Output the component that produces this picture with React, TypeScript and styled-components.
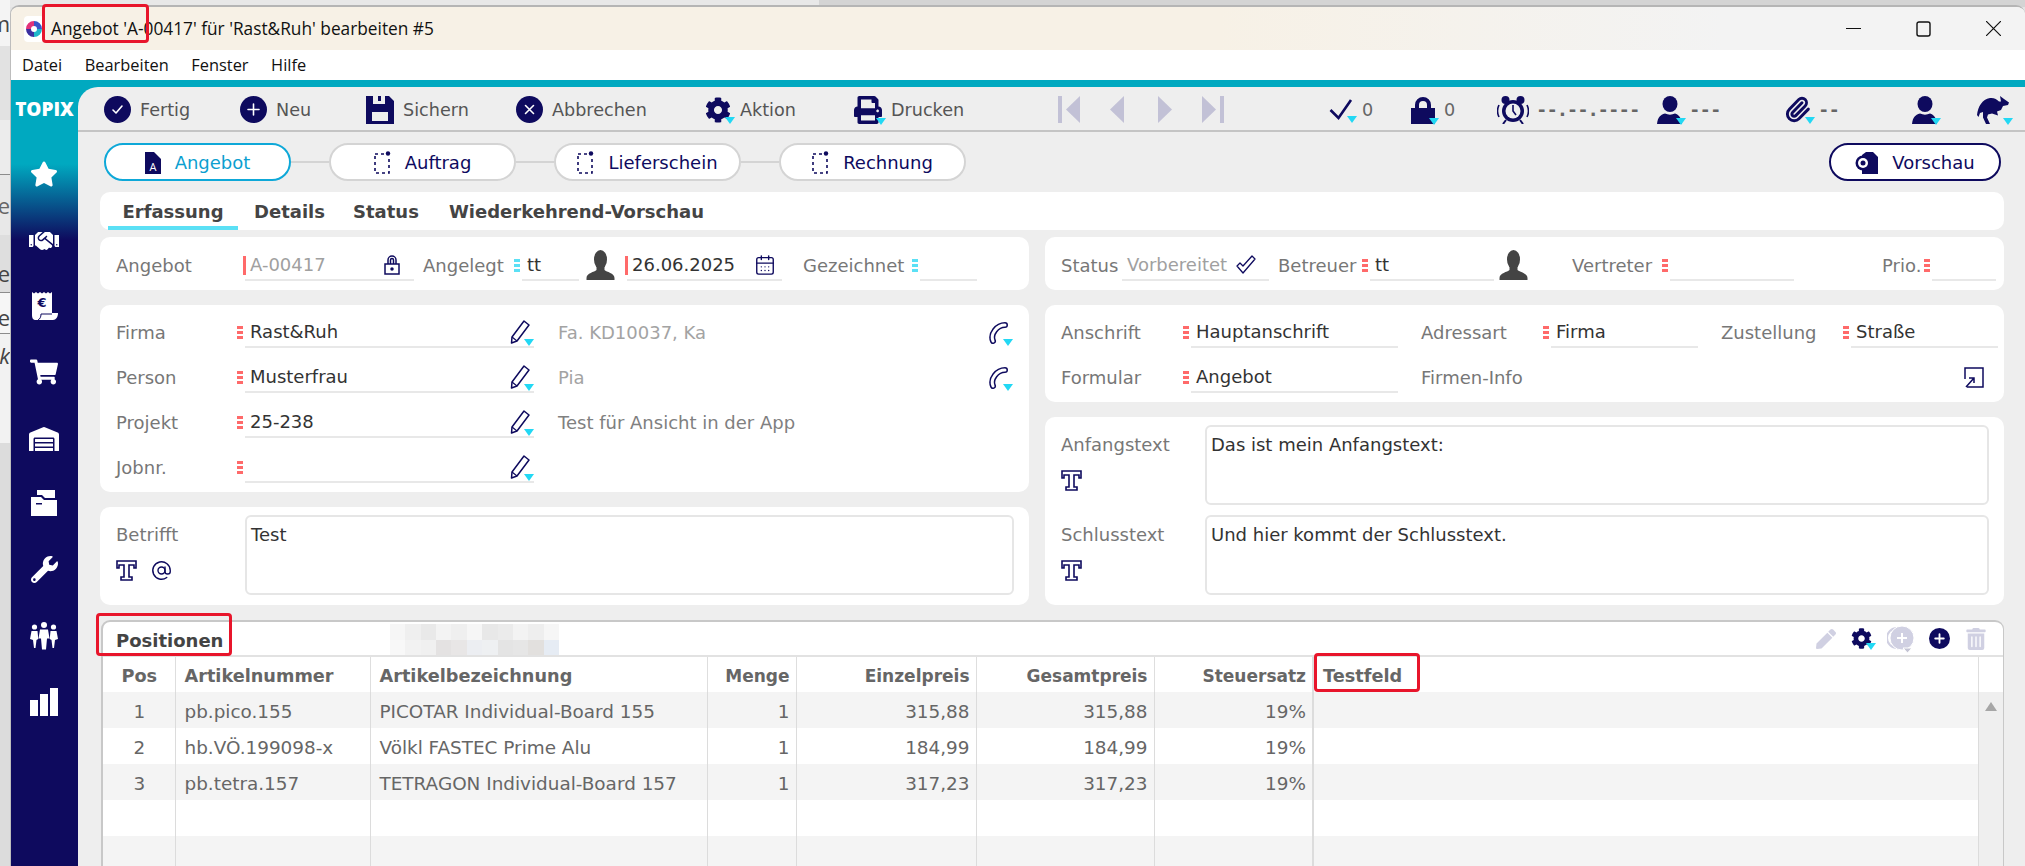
import React from 'react';
import styled, { createGlobalStyle } from 'styled-components';
import { FaCog, FaPrint, FaStar, FaHandshake, FaShoppingCart, FaWarehouse, FaWrench, FaPen, FaTrashAlt } from 'react-icons/fa';
import { AtSign, CalendarDays, Paperclip } from 'lucide-react';

const NAVY = '#0e0a5e';
const FONT = '"DejaVu Sans", sans-serif';

const GlobalStyle = createGlobalStyle`
    html, body { margin: 0; padding: 0; background: #e4e4e4; }
    * { box-sizing: border-box; }
`;

const Page = styled.div`
    position: relative;
    width: 2025px;
    height: 866px;
    overflow: hidden;
    display: grid;
    grid-template-rows: 7px 1fr;
    grid-template-columns: 10px 1fr;
    font-family: ${FONT};
    font-size: 18px;
    background: #e4e4e4;
`;

const TopStrip = styled.div`
    grid-column: 1 / -1;
    background: linear-gradient(90deg, #e8e8e8 0 819px, #d4d4d4 819px);
`;

const LeftStrip = styled.div`
    display: flex;
    flex-direction: column;
    overflow: hidden;
    margin-top: -7px;
    font-family: "Open Sans", sans-serif;
    font-size: 22px;
    color: #444;
`;

const StripRow = styled.div<{ $h: number; $bg: string; $line?: boolean; $pt?: number }>`
    height: ${(p) => p.$h}px;
    flex: none;
    display: flex;
    align-items: center;
    justify-content: flex-end;
    white-space: nowrap;
    padding-top: ${(p) => p.$pt || 0}px;
    background: ${(p) => p.$bg};
    border-bottom: ${(p) => (p.$line ? '1px solid #8c8c8c' : 'none')};
`;

const Win = styled.div`
    display: flex;
    flex-direction: column;
    min-width: 0;
    overflow: hidden;
    border-top: 2px solid #b5b5b5;
    border-left: 1px solid #bdbdbd;
    border-radius: 9px 9px 0 0;
    background: #fff;
    margin-top: -2px;
`;

const TitleBar = styled.div`
    height: 43px;
    flex: none;
    display: flex;
    align-items: center;
    padding-left: 13px;
    background: linear-gradient(90deg, #f7f1e6 0, #f7f1e6 60%, #f3f3f3 85%);
    font-family: "Open Sans", sans-serif;
    font-size: 17.3px;
    color: #111;
`;

const AppIcon = styled.svg`
    width: 20px;
    height: 26px;
    margin-right: 7px;
    flex: none;
`;

const WinControls = styled.div`
    margin-left: auto;
    display: flex;
    align-items: center;
    gap: 54px;
    padding-right: 24px;
`;

const MenuBar = styled.div`
    height: 28px;
    flex: none;
    display: flex;
    align-items: center;
    gap: 22.5px;
    padding-left: 11px;
    font-family: "Open Sans", sans-serif;
    font-size: 16.4px;
    color: #111;
`;

const Shell = styled.div`
    flex: 1;
    margin-top: 2px;
    display: flex;
    min-height: 0;
    background: linear-gradient(180deg, #00a9c0 0, #00a9c0 84px, ${NAVY} 160px);
    padding-top: 7px;
`;

const Sidebar = styled.nav`
    width: 67px;
    flex: none;
    display: flex;
    flex-direction: column;
    align-items: center;
    color: #fff;
`;

const Brand = styled.div`
    font-family: "Open Sans", sans-serif;
    font-weight: 800;
    font-size: 19px;
    line-height: 20px;
    margin-top: 12px;
    margin-bottom: 37px;
`;

const SideItem = styled.div`
    height: 66px;
    flex: none;
    width: 100%;
    display: flex;
    justify-content: center;
    padding-top: 4px;
    padding-right: 1px;
    svg { display: block; }
`;

const Main = styled.main`
    flex: 1;
    min-width: 0;
    background: #eeeeee;
    border-top-left-radius: 20px;
    display: flex;
    flex-direction: column;
`;

const Toolbar = styled.div`
    height: 45px;
    flex: none;
    display: flex;
    align-items: center;
    padding: 2px 0 0 26px;
    border-bottom: 2px solid #c4c4c4;
    font-size: 17.6px;
    color: #555;
`;

const ToolItem = styled.div<{ $w: number }>`
    width: ${(p) => p.$w}px;
    flex: none;
    display: flex;
    align-items: center;
    gap: 9px;
    white-space: nowrap;
`;

const IconWrap = styled.span`
    position: relative;
    display: inline-flex;
    flex: none;
    line-height: 0;
    color: ${NAVY};
`;

const Caret = styled.i`
    position: absolute;
    right: -4px;
    bottom: -1px;
    width: 0;
    height: 0;
    border-left: 5px solid transparent;
    border-right: 5px solid transparent;
    border-top: 7px solid #22d8f4;
`;

const Dim = styled.span`
    color: #666;
`;

const Dashes = styled(Dim)`
    letter-spacing: 3px;
    font-weight: 700;
    font-size: 18px;
`;

const Content = styled.div`
    padding: 0 21px 0 22px;
`;

const PillRow = styled.div`
    display: flex;
    align-items: center;
    padding: 11px 3px 0 4px;
`;

const Pill = styled.div<{ $state?: 'active' | 'preview' }>`
    width: ${(p) => (p.$state === 'preview' ? '172px' : '187px')};
    height: 38px;
    flex: none;
    display: flex;
    align-items: center;
    justify-content: center;
    gap: 14px;
    padding-top: 1px;
    background: #fff;
    border-radius: 19px;
    border: 2px solid
        ${(p) => (p.$state === 'active' ? '#0ea8d8' : p.$state === 'preview' ? NAVY : '#d4d4d4')};
    color: ${(p) => (p.$state === 'active' ? '#0c9fd0' : NAVY)};
`;

const PillLink = styled.div`
    width: 38px;
    height: 2px;
    flex: none;
    background: #d4d4d4;
`;

const PreviewSlot = styled.div`
    margin-left: auto;
`;

const TabCard = styled.div`
    margin-top: 11px;
    height: 38px;
    background: #fff;
    border-radius: 10px;
    display: flex;
    padding-left: 8px;
`;

const Tab = styled.div<{ $active?: boolean; $w: number; $pl?: number }>`
    width: ${(p) => p.$w}px;
    flex: none;
    padding-top: 9px;
    padding-left: ${(p) => p.$pl || 0}px;
    text-align: ${(p) => (p.$active ? 'center' : 'left')};
    font-weight: 700;
    color: #444;
    white-space: nowrap;
    border-bottom: 4px solid ${(p) => (p.$active ? '#5be0f5' : 'transparent')};
`;

const Columns = styled.div<{ $mt: number }>`
    margin-top: ${(p) => p.$mt}px;
    display: grid;
    grid-template-columns: 929px 959px;
    column-gap: 16px;
`;

const Stack = styled.div`
    display: flex;
    flex-direction: column;
    gap: 15px;
`;

const Card = styled.section`
    background: #fff;
    border-radius: 10px;
    padding: 13px 15px 9px 16px;
`;

const FormRows = styled(Card)`
    padding-top: 12px;
    display: flex;
    flex-direction: column;
    gap: 14px;
`;

const Row = styled.div`
    display: flex;
    align-items: stretch;
    height: 31px;
`;

const Label = styled.div<{ $w: number; $ml?: number }>`
    width: ${(p) => p.$w}px;
    margin-left: ${(p) => p.$ml || 0}px;
    flex: none;
    color: #777;
    line-height: 31px;
    white-space: nowrap;
`;

const Field = styled.div<{ $w: number; $muted?: boolean }>`
    position: relative;
    width: ${(p) => p.$w}px;
    flex: none;
    display: flex;
    align-items: center;
    justify-content: space-between;
    padding: 0 4px 0 5px;
    border-bottom: 2px solid #e8e8e8;
    color: ${(p) => (p.$muted ? '#a0a0a0' : '#333')};
    white-space: nowrap;
`;

const Marker = styled.i<{ $kind: 'red' | 'cyan' | 'bar' }>`
    position: absolute;
    left: ${(p) => (p.$kind === 'bar' ? '-2px' : '-8px')};
    top: ${(p) => (p.$kind === 'bar' ? '6px' : '9px')};
    width: ${(p) => (p.$kind === 'bar' ? '3px' : '6px')};
    height: ${(p) => (p.$kind === 'bar' ? '19px' : '13px')};
    background: ${(p) =>
        p.$kind === 'bar'
            ? '#ff6a6a'
            : `repeating-linear-gradient(180deg, ${p.$kind === 'red' ? '#ff6a6a' : '#5be0f5'} 0 3px, transparent 3px 5px)`};
`;

const Trailing = styled.span<{ $mr: number }>`
    display: inline-flex;
    line-height: 0;
    color: ${NAVY};
    margin-right: ${(p) => p.$mr}px;
`;

const Note = styled.div<{ $muted?: boolean }>`
    flex: 1;
    margin-left: 24px;
    display: flex;
    align-items: center;
    justify-content: space-between;
    padding-right: 5px;
    color: ${(p) => (p.$muted ? '#a3a3a3' : '#808080')};
    white-space: nowrap;
`;

const Slot = styled.div<{ $w: number; $pr?: number }>`
    width: ${(p) => p.$w}px;
    flex: none;
    display: flex;
    align-items: center;
    justify-content: center;
    padding-right: ${(p) => p.$pr || 0}px;
    padding-bottom: 2px;
`;

const InfoIcon = styled.div`
    margin-left: auto;
    padding-right: 5px;
    display: flex;
    align-items: center;
`;

const TextCard = styled(Card)`
    padding: 8px 15px 10px 16px;
    display: flex;
    flex-direction: column;
    gap: 10px;
`;

const TextRow = styled.div<{ $label: number }>`
    display: grid;
    grid-template-columns: ${(p) => p.$label}px 1fr;
    height: 80px;
`;

const TextLabel = styled.div`
    color: #777;
    line-height: 22px;
    padding-top: 9px;
`;

const TextTools = styled.div`
    margin-top: 14px;
    display: flex;
    align-items: center;
    gap: 14px;
    color: ${NAVY};
    svg { display: block; }
`;

const TextBox = styled.div`
    border: 2px solid #e6e6e6;
    border-radius: 6px;
    padding: 7px 4px;
    line-height: 22px;
    color: #333;
`;

const PositionsPanel = styled.section`
    margin: 15px 0 0 1px;
    background: #fff;
    border: 2px solid #c8c8c8;
    border-bottom: none;
    border-right-width: 1px;
    border-radius: 9px 9px 0 0;
`;

const PanelHead = styled.div`
    height: 35px;
    display: flex;
    align-items: center;
    border-bottom: 2px solid #e2e2e2;
`;

const PanelTitle = styled.div`
    width: 287px;
    flex: none;
    padding: 4px 0 0 13px;
    font-weight: 700;
    color: #444;
`;

const Mosaic = styled.div`
    width: 169px;
    height: 31px;
    flex: none;
    align-self: flex-end;
    display: grid;
    grid-template-columns: repeat(11, 1fr);
    grid-template-rows: repeat(2, 1fr);
`;

const MosaicCell = styled.div<{ $c: string }>`
    background: ${(p) => p.$c};
`;

const PanelTools = styled.div`
    margin-left: auto;
    display: flex;
    align-items: center;
    gap: 15px;
    padding-right: 16px;
`;

const ToolIcon = styled(IconWrap)<{ $off?: boolean }>`
    color: ${(p) => (p.$off ? '#d0d0e2' : NAVY)};
`;

const TableBody = styled.div`
    display: flex;
    align-items: stretch;
`;

const Table = styled.table`
    width: 1875px;
    flex: none;
    table-layout: fixed;
    border-collapse: collapse;
    font-size: 18.4px;
    color: #666;
`;

const Th = styled.th<{ $align?: string; $heavy?: boolean }>`
    height: 35px;
    padding: 2px ${(p) => (p.$align === 'right' ? '6px' : '8px')} 0 9px;
    font-size: ${(p) => (p.$align === 'right' ? '17px' : '17.7px')};
    font-weight: 700;
    text-align: ${(p) => p.$align || 'left'};
    border-right: ${(p) => (p.$heavy ? '2px' : '1px')} solid #dedede;
    white-space: nowrap;
`;

const Td = styled.td<{ $align?: string; $heavy?: boolean }>`
    height: 36px;
    padding: 2px ${(p) => (p.$align === 'right' ? '6px' : '8px')} 0 9px;
    text-align: ${(p) => p.$align || 'left'};
    border-right: ${(p) => (p.$heavy ? '2px' : '1px')} solid #dcdcdc;
    white-space: nowrap;
`;

const Tr = styled.tr<{ $stripe?: boolean }>`
    background: ${(p) => (p.$stripe ? '#f4f4f4' : '#fff')};
`;

const ScrollColumn = styled.div`
    flex: 1;
    display: flex;
    flex-direction: column;
`;

const ScrollHead = styled.div`
    height: 35px;
    flex: none;
`;

const ScrollTrack = styled.div`
    flex: 1;
    background: #efefef;
    display: flex;
    justify-content: center;
    padding-top: 10px;
`;

const ScrollArrow = styled.i`
    width: 0;
    height: 0;
    border-left: 6px solid transparent;
    border-right: 6px solid transparent;
    border-bottom: 9px solid #a6a6a6;
`;

const Mark = styled.div`
    position: absolute;
    border: 3px solid #e8152b;
    border-radius: 4px;
    pointer-events: none;
`;

const TitleMark = styled(Mark)`
    left: 42px;
    top: 4px;
    width: 107px;
    height: 39px;
`;

const PositionsMark = styled(Mark)`
    left: 96px;
    top: 613px;
    width: 136px;
    height: 43px;
`;

const TestfeldMark = styled(Mark)`
    left: 1314px;
    top: 653px;
    width: 106px;
    height: 39px;
`;

/* icons */

const Circle: React.FC<{ size?: number; children: React.ReactNode }> = ({ size = 27, children }) => (
    <svg width={size} height={size} viewBox="0 0 27 27">
        <circle cx="13.5" cy="13.5" r="13.5" fill={NAVY} />
        <g stroke="#fff" strokeWidth="1.6" fill="none" strokeLinecap="round" strokeLinejoin="round">
            {children}
        </g>
    </svg>
);

const Floppy = () => (
    <svg width="28" height="28" viewBox="0 0 28 28" fill={NAVY}>
        <path fillRule="evenodd" d="M0 0h23l5 5v23H0zM7 0v8h12V0h-4v5h-3V0zM6 16v9h16v-9z" />
    </svg>
);

const DashedDoc = () => (
    <svg width="17" height="23" viewBox="0 0 17 23" fill="none">
        <path d="M1 5v17h14V6" stroke={NAVY} strokeWidth="1.6" strokeDasharray="3 3" />
        <path d="M1 3h9" stroke={NAVY} strokeWidth="1.6" strokeDasharray="3 3" />
        <circle cx="14" cy="2.5" r="2.2" fill={NAVY} />
    </svg>
);

const OfferDoc = () => (
    <svg width="16" height="22" viewBox="0 0 16 22">
        <path d="M0 0h9l7 7v15H0z" fill={NAVY} />
        <text x="8" y="19" fontSize="11" fontFamily="Open Sans, sans-serif" fill="#fff" textAnchor="middle">
            A
        </text>
    </svg>
);

const PreviewDoc = () => (
    <svg width="23" height="22" viewBox="0 0 23 22">
        <path d="M7 3l4-3h7l5 5v17H7z" fill={NAVY} />
        <circle cx="8" cy="11" r="7.500" fill={NAVY} />
        <circle cx="8" cy="11" r="5" fill="#fff" />
        <circle cx="8" cy="11" r="2.500" fill={NAVY} />
    </svg>
);

const NavArrow: React.FC<{ bar?: 'left' | 'right'; flip?: boolean }> = ({ bar, flip }) => (
    <svg width="22" height="27" viewBox="0 0 22 27" fill="#c2c1d6">
        {flip ? <path d="M0 0l14 13.5L0 27z" /> : <path d={bar ? 'M22 0L8 13.5 22 27z' : 'M14 0L0 13.5 14 27z'} />}
        {bar === 'left' && <rect x="0" y="0" width="4" height="27" />}
        {bar === 'right' && <rect x="18" y="0" width="4" height="27" />}
    </svg>
);

const CheckMark = () => (
    <svg width="24" height="24" viewBox="0 0 24 24" fill="none">
        <path d="M1.5 12l8 8L22 2" stroke={NAVY} strokeWidth="2.6" />
    </svg>
);

const Padlock = () => (
    <svg width="24" height="28" viewBox="0 0 24 28" fill={NAVY}>
        <path fillRule="evenodd" d="M4 12V9a8 8 0 0116 0v3h-4V9a4 4 0 00-8 0v3z" />
        <rect x="0" y="12" width="24" height="16" />
    </svg>
);

const AlarmClock = () => (
    <svg width="32" height="28" viewBox="0 0 32 28">
        <circle cx="16" cy="15" r="11" fill={NAVY} />
        <circle cx="16" cy="15" r="7.5" fill="#eee" />
        <path d="M16 9v6l3 4" stroke={NAVY} strokeWidth="1.6" fill="none" />
        <circle cx="8.5" cy="4" r="4" fill={NAVY} />
        <circle cx="23.5" cy="4" r="4" fill={NAVY} />
        <path d="M9 24l-3 4M23 24l3 4" stroke={NAVY} strokeWidth="2" />
        <path d="M2 9c-2 4-2 8 0 12M30 9c2 4 2 8 0 12" stroke={NAVY} strokeWidth="1.6" fill="none" />
    </svg>
);

const PersonIcon = () => (
    <svg width="25" height="28" viewBox="0 0 25 28" fill={NAVY}>
        <ellipse cx="13" cy="8" rx="7.5" ry="8" />
        <path d="M0 28c1-7 3-9 8-10.500 3 1.500 7 1.500 10 0 4 1.500 6 3.500 7 10.500z" />
    </svg>
);

const Kangaroo = () => (
    <svg width="32" height="28" viewBox="0 0 32 28" fill={NAVY}>
        <path d="M0 19C1 11 5 3 13 2c4-.5 7 1.500 9 3.500h2L23 0l4 3 5 3.500-1 2.500-5 1-2 4-4 1.500 1 4-6-2-4 1-1 3 3 6.500H9L6 21.500V16l-3 1-1.500 4z" />
    </svg>
);

const Bust = () => (
    <svg width="29" height="30" viewBox="0 0 29 30" fill="#444">
        <ellipse cx="14.500" cy="9.500" rx="6.500" ry="9.500" />
        <path d="M10.500 16v4c-2 2-10 3-10 8v2h28v-2c0-5-8-6-10-8v-4z" />
    </svg>
);

const Pencil = () => (
    <IconWrap>
        <svg width="20" height="26" viewBox="0 0 20 26" fill="none">
            <path d="M1.500 24l.5-6L14 2l5 4L7 22z" stroke={NAVY} strokeWidth="1.500" strokeLinejoin="round" />
            <path d="M2 18l5 4" stroke={NAVY} strokeWidth="1.200" />
        </svg>
        <Caret />
    </IconWrap>
);

const Handset = () => (
    <IconWrap>
        <svg width="21" height="24" viewBox="0 0 21 24" fill="none">
            <path d="M5 20C2 13 9 4 17 4" stroke={NAVY} strokeWidth="6" strokeLinecap="round" />
            <path d="M5 20C2 13 9 4 17 4" stroke="#fff" strokeWidth="3" strokeLinecap="round" />
        </svg>
        <Caret />
    </IconWrap>
);

const LockOutline = () => (
    <svg width="16" height="20" viewBox="0 0 16 20" fill="none" stroke={NAVY} strokeWidth="1.500">
        <path d="M4 9V5a4 4 0 018 0v4M6.500 9V5a1.500 1.500 0 013 0v4" />
        <rect x="1" y="9" width="14" height="10" />
        <circle cx="8" cy="14" r="1" fill={NAVY} />
    </svg>
);

const DoubleCheck = () => (
    <svg width="20" height="20" viewBox="0 0 20 20" fill="none">
        <path d="M1 11l3-3 3 3L16 1l3 3L7 18z" stroke={NAVY} strokeWidth="1.300" strokeLinejoin="round" />
    </svg>
);

const OpenLink = () => (
    <svg width="20" height="21" viewBox="0 0 20 21" fill="none" stroke={NAVY} strokeWidth="1.500">
        <path d="M1 12V1h18v19H3" />
        <path d="M2 20l8-9M5 11h5v5" />
    </svg>
);

const SerifT = () => (
    <svg width="21" height="21" viewBox="0 0 21 21" fill="#fff" stroke={NAVY} strokeWidth="1.600">
        <path d="M1 1h19v7h-2V5h-5v12h3v3H5v-3h3V5H3v3H1z" />
    </svg>
);

const Receipt = () => (
    <svg width="28" height="28" viewBox="0 0 28 28">
        <path d="M2 0l2 1.500L6 0l2 1.500L10 0l2 1.500L14 0l2 1.500L18 0l2 1.500L22 0v21h6c0 4-2 7-5 7H6c-3 0-4-2-4-5z" fill="#fff" />
        <text x="12" y="15" fontSize="13" fontWeight="700" fontFamily="DejaVu Sans, sans-serif" fill={NAVY} textAnchor="middle">
            €
        </text>
        <path d="M8 28c2-1 3-3 3-6h11" stroke={NAVY} strokeWidth="1" fill="none" />
    </svg>
);

const Folder = () => (
    <svg width="26" height="26" viewBox="0 0 26 26" fill="#fff">
        <path d="M6 0h18v8H14L11 5H6z" />
        <path d="M0 7h10l3 3h13v16H0z" />
        <rect x="5" y="13" width="6" height="1.500" fill={NAVY} />
    </svg>
);

const People = () => (
    <svg width="28" height="28" viewBox="0 0 28 28" fill="#fff">
        <circle cx="14" cy="3" r="3" />
        <circle cx="4.500" cy="5" r="2.600" />
        <circle cx="23.500" cy="5" r="2.600" />
        <path d="M10 7.500h8l1.500 9-2.500 0-1 11h-4l-1-11-2.500 0z" />
        <path d="M1.500 9h6l.8 8-1.800 1-1 8H4l-1-8-3-1zM20.500 9h6l1.500 8-3 1-1 8h-1.500l-1-8-1.800-1z" />
    </svg>
);

const Bars = () => (
    <svg width="28" height="28" viewBox="0 0 28 28" fill="#fff">
        <rect x="0" y="12" width="8" height="16" />
        <rect x="10" y="6" width="8" height="22" />
        <rect x="20" y="0" width="8" height="28" />
    </svg>
);

const CopyPlus = () => (
    <svg width="27" height="28" viewBox="0 0 27 28">
        <circle cx="10" cy="13" r="10" fill="none" stroke="#d0d0e2" strokeWidth="2" />
        <circle cx="15" cy="13" r="12" fill="#d0d0e2" stroke="#fff" strokeWidth="1" />
        <path d="M15 8v10M10 13h10" stroke="#fff" strokeWidth="2" />
        <path d="M16 23h9l-4.500 5z" fill="#c4c4d4" stroke="#fff" />
    </svg>
);

const BLUR = [
    '#f6f6f6', '#efefef', '#e9e9e9', '#f3f3f3', '#efefef', '#f6f6f6', '#e8e8e8', '#ebebeb', '#f3f3f3', '#eeeeee', '#f6f6f6',
    '#f8f8f8', '#f2f2f2', '#f0f0f0', '#e4e2e2', '#e8e6e6', '#eceef2', '#eef0f2', '#e4e4e4', '#e6e6e6', '#e2e0de', '#e6ecf4',
];

const ROWS = [
    { pos: '1', nr: 'pb.pico.155', name: 'PICOTAR Individual-Board 155', qty: '1', unit: '315,88', total: '315,88', tax: '19%' },
    { pos: '2', nr: 'hb.VÖ.199098-x', name: 'Völkl FASTEC Prime Alu', qty: '1', unit: '184,99', total: '184,99', tax: '19%' },
    { pos: '3', nr: 'pb.tetra.157', name: 'TETRAGON Individual-Board 157', qty: '1', unit: '317,23', total: '317,23', tax: '19%' },
    { pos: '', nr: '', name: '', qty: '', unit: '', total: '', tax: '' },
    { pos: '', nr: '', name: '', qty: '', unit: '', total: '', tax: '' },
];

const App: React.FC = () => {
    return (
        <Page>
            <GlobalStyle />
            <TopStrip />
            <LeftStrip>
                <StripRow $h={46} $bg="#f4f4f4">m</StripRow>
                <StripRow $h={74} $bg="#e2e2e2" />
                <StripRow $h={55} $bg="#ececec" $line />
                <StripRow $h={60} $bg="#e8e8e8">
                    <Dim>e</Dim>
                </StripRow>
                <StripRow $h={58} $bg="#dedede" $pt={18} $line>ge</StripRow>
                <StripRow $h={41} $bg="#f6f6f6" $pt={8} $line>le</StripRow>
                <StripRow $h={42} $bg="#f2f2f2"><em>k</em></StripRow>
                <StripRow $h={67} $bg="#f2f2f2" />
                <StripRow $h={423} $bg="#dcdcdc" />
            </LeftStrip>
            <Win>
                <TitleBar>
                    <AppIcon viewBox="0 0 20 26">
                        <rect width="20" height="26" rx="4" fill="#fff" />
                        <path d="M10 5a8 8 0 00-8 8h5a3 3 0 013-3z" fill="#e2337a" />
                        <path d="M10 5a8 8 0 018 8h-5a3 3 0 00-3-3z" fill="#3a55c8" />
                        <path d="M2 13a8 8 0 008 8v-5a3 3 0 01-3-3z" fill="#3b2fa0" />
                        <path d="M18 13a8 8 0 01-8 8v-5a3 3 0 003-3z" fill="#1fb6c9" />
                    </AppIcon>
                    Angebot &apos;A-00417&apos; für &apos;Rast&amp;Ruh&apos; bearbeiten #5
                    <WinControls>
                        <svg width="15" height="15" viewBox="0 0 15 15" stroke="#111" strokeWidth="1.200" fill="none">
                            <path d="M0 7.500h15" />
                        </svg>
                        <svg width="17" height="16" viewBox="0 0 17 16" stroke="#111" strokeWidth="1.400" fill="none">
                            <rect x="2" y="1" width="13" height="14" rx="2" />
                        </svg>
                        <svg width="15" height="15" viewBox="0 0 15 15" stroke="#111" strokeWidth="1.200" fill="none">
                            <path d="M0 0l15 15M15 0L0 15" />
                        </svg>
                    </WinControls>
                </TitleBar>
                <MenuBar>
                    <span>Datei</span>
                    <span>Bearbeiten</span>
                    <span>Fenster</span>
                    <span>Hilfe</span>
                </MenuBar>
                <Shell>
                    <Sidebar>
                        <Brand>TOPIX</Brand>
                        <SideItem><FaStar size={28} /></SideItem>
                        <SideItem><FaHandshake size={30} /></SideItem>
                        <SideItem><Receipt /></SideItem>
                        <SideItem><FaShoppingCart size={28} /></SideItem>
                        <SideItem><FaWarehouse size={30} /></SideItem>
                        <SideItem><Folder /></SideItem>
                        <SideItem><FaWrench size={27} /></SideItem>
                        <SideItem><People /></SideItem>
                        <SideItem><Bars /></SideItem>
                    </Sidebar>
                    <Main>
                        <Toolbar>
                            <ToolItem $w={136}>
                                <IconWrap><Circle><path d="M9 14l3 3 6-7" /></Circle></IconWrap>Fertig
                            </ToolItem>
                            <ToolItem $w={126}>
                                <IconWrap><Circle><path d="M13.500 8v11M8 13.500h11" /></Circle></IconWrap>Neu
                            </ToolItem>
                            <ToolItem $w={150}>
                                <IconWrap><Floppy /></IconWrap>Sichern
                            </ToolItem>
                            <ToolItem $w={189}>
                                <IconWrap><Circle><path d="M9.500 9.500l8 8M17.500 9.500l-8 8" /></Circle></IconWrap>Abbrechen
                            </ToolItem>
                            <ToolItem $w={149}>
                                <IconWrap><FaCog size={26} /><Caret /></IconWrap>Aktion
                            </ToolItem>
                            <ToolItem $w={204}>
                                <IconWrap><FaPrint size={28} /><Caret /></IconWrap>Drucken
                            </ToolItem>
                            <ToolItem $w={52}><NavArrow bar="left" /></ToolItem>
                            <ToolItem $w={48}><NavArrow /></ToolItem>
                            <ToolItem $w={44}><NavArrow flip /></ToolItem>
                            <ToolItem $w={127}><NavArrow flip bar="right" /></ToolItem>
                            <ToolItem $w={82}>
                                <IconWrap><CheckMark /><Caret /></IconWrap>
                                <Dim>0</Dim>
                            </ToolItem>
                            <ToolItem $w={86}>
                                <IconWrap><Padlock /><Caret /></IconWrap>
                                <Dim>0</Dim>
                            </ToolItem>
                            <ToolItem $w={160}>
                                <IconWrap><AlarmClock /></IconWrap>
                                <Dashes>--.--.----</Dashes>
                            </ToolItem>
                            <ToolItem $w={127}>
                                <IconWrap><PersonIcon /><Caret /></IconWrap>
                                <Dashes>---</Dashes>
                            </ToolItem>
                            <ToolItem $w={128}>
                                <IconWrap><Paperclip size={27} strokeWidth={2.6} /><Caret /></IconWrap>
                                <Dashes>--</Dashes>
                            </ToolItem>
                            <ToolItem $w={65}>
                                <IconWrap><PersonIcon /><Caret /></IconWrap>
                            </ToolItem>
                            <ToolItem $w={36}>
                                <IconWrap><Kangaroo /><Caret /></IconWrap>
                            </ToolItem>
                        </Toolbar>
                        <Content>
                            <PillRow>
                                <Pill $state="active"><OfferDoc />Angebot</Pill>
                                <PillLink />
                                <Pill><DashedDoc />Auftrag</Pill>
                                <PillLink />
                                <Pill><DashedDoc />Lieferschein</Pill>
                                <PillLink />
                                <Pill><DashedDoc />Rechnung</Pill>
                                <PreviewSlot>
                                    <Pill $state="preview"><PreviewDoc />Vorschau</Pill>
                                </PreviewSlot>
                            </PillRow>
                            <TabCard>
                                <Tab $active $w={130}>Erfassung</Tab>
                                <Tab $w={115} $pl={16}>Details</Tab>
                                <Tab $w={96}>Status</Tab>
                                <Tab $w={300}>Wiederkehrend-Vorschau</Tab>
                            </TabCard>
                            <Columns $mt={7}>
                                <Card>
                                    <Row>
                                        <Label $w={129}>Angebot</Label>
                                        <Field $w={169} $muted>
                                            <Marker $kind="bar" />
                                            A-00417
                                            <Trailing $mr={10}><LockOutline /></Trailing>
                                        </Field>
                                        <Label $w={99} $ml={9}>Angelegt</Label>
                                        <Field $w={57}>
                                            <Marker $kind="cyan" />
                                            tt
                                        </Field>
                                        <Slot $w={48} $pr={6}><Bust /></Slot>
                                        <Field $w={155}>
                                            <Marker $kind="bar" />
                                            26.06.2025
                                            <Trailing $mr={2}><CalendarDays size={22} strokeWidth={1.5} /></Trailing>
                                        </Field>
                                        <Label $w={117} $ml={21}>Gezeichnet</Label>
                                        <Field $w={57}>
                                            <Marker $kind="cyan" />
                                        </Field>
                                    </Row>
                                </Card>
                                <Card>
                                    <Row>
                                        <Label $w={61}>Status</Label>
                                        <Field $w={147} $muted>
                                            Vorbereitet
                                            <Trailing $mr={9}><DoubleCheck /></Trailing>
                                        </Field>
                                        <Label $w={92} $ml={9}>Betreuer</Label>
                                        <Field $w={124}>
                                            <Marker $kind="red" />
                                            tt
                                        </Field>
                                        <Slot $w={39}><Bust /></Slot>
                                        <Label $w={98} $ml={39}>Vertreter</Label>
                                        <Field $w={124}>
                                            <Marker $kind="red" />
                                        </Field>
                                        <Label $w={50} $ml={88}>Prio.</Label>
                                        <Field $w={64}>
                                            <Marker $kind="red" />
                                        </Field>
                                    </Row>
                                </Card>
                            </Columns>
                            <Columns $mt={15}>
                                <Stack>
                                    <FormRows>
                                        <Row>
                                            <Label $w={129}>Firma</Label>
                                            <Field $w={289}>
                                                <Marker $kind="red" />
                                                Rast&amp;Ruh
                                                <Pencil />
                                            </Field>
                                            <Note $muted>Fa. KD10037, Ka<Handset /></Note>
                                        </Row>
                                        <Row>
                                            <Label $w={129}>Person</Label>
                                            <Field $w={289}>
                                                <Marker $kind="red" />
                                                Musterfrau
                                                <Pencil />
                                            </Field>
                                            <Note $muted>Pia<Handset /></Note>
                                        </Row>
                                        <Row>
                                            <Label $w={129}>Projekt</Label>
                                            <Field $w={289}>
                                                <Marker $kind="red" />
                                                25-238
                                                <Pencil />
                                            </Field>
                                            <Note>Test für Ansicht in der App</Note>
                                        </Row>
                                        <Row>
                                            <Label $w={129}>Jobnr.</Label>
                                            <Field $w={289}>
                                                <Marker $kind="red" />
                                                <span />
                                                <Pencil />
                                            </Field>
                                        </Row>
                                    </FormRows>
                                    <TextCard>
                                        <TextRow $label={129}>
                                            <div>
                                                <TextLabel>Betrifft</TextLabel>
                                                <TextTools>
                                                    <SerifT />
                                                    <AtSign size={21} strokeWidth={1.6} />
                                                </TextTools>
                                            </div>
                                            <TextBox>Test</TextBox>
                                        </TextRow>
                                    </TextCard>
                                </Stack>
                                <Stack>
                                    <FormRows>
                                        <Row>
                                            <Label $w={130}>Anschrift</Label>
                                            <Field $w={207}>
                                                <Marker $kind="red" />
                                                Hauptanschrift
                                            </Field>
                                            <Label $w={130} $ml={23}>Adressart</Label>
                                            <Field $w={147}>
                                                <Marker $kind="red" />
                                                Firma
                                            </Field>
                                            <Label $w={130} $ml={23}>Zustellung</Label>
                                            <Field $w={147}>
                                                <Marker $kind="red" />
                                                Straße
                                            </Field>
                                        </Row>
                                        <Row>
                                            <Label $w={130}>Formular</Label>
                                            <Field $w={207}>
                                                <Marker $kind="red" />
                                                Angebot
                                            </Field>
                                            <Label $w={130} $ml={23}>Firmen-Info</Label>
                                            <InfoIcon><OpenLink /></InfoIcon>
                                        </Row>
                                    </FormRows>
                                    <TextCard>
                                        <TextRow $label={144}>
                                            <div>
                                                <TextLabel>Anfangstext</TextLabel>
                                                <TextTools><SerifT /></TextTools>
                                            </div>
                                            <TextBox>Das ist mein Anfangstext:</TextBox>
                                        </TextRow>
                                        <TextRow $label={144}>
                                            <div>
                                                <TextLabel>Schlusstext</TextLabel>
                                                <TextTools><SerifT /></TextTools>
                                            </div>
                                            <TextBox>Und hier kommt der Schlusstext.</TextBox>
                                        </TextRow>
                                    </TextCard>
                                </Stack>
                            </Columns>
                            <PositionsPanel>
                                <PanelHead>
                                    <PanelTitle>Positionen</PanelTitle>
                                    <Mosaic>
                                        {BLUR.map((c, i) => (
                                            <MosaicCell key={i} $c={c} />
                                        ))}
                                    </Mosaic>
                                    <PanelTools>
                                        <ToolIcon $off><FaPen size={20} /></ToolIcon>
                                        <ToolIcon><FaCog size={21} /><Caret /></ToolIcon>
                                        <ToolIcon $off><CopyPlus /></ToolIcon>
                                        <ToolIcon>
                                            <Circle size={21}><path d="M13.500 8v11M8 13.500h11" strokeWidth="2.400" /></Circle>
                                        </ToolIcon>
                                        <ToolIcon $off><FaTrashAlt size={22} /></ToolIcon>
                                    </PanelTools>
                                </PanelHead>
                                <TableBody>
                                    <Table>
                                        <colgroup>
                                            <col width="72" />
                                            <col width="195" />
                                            <col width="337" />
                                            <col width="89" />
                                            <col width="180" />
                                            <col width="178" />
                                            <col width="159" />
                                            <col width="665" />
                                        </colgroup>
                                        <thead>
                                            <tr>
                                                <Th $align="center">Pos</Th>
                                                <Th>Artikelnummer</Th>
                                                <Th>Artikelbezeichnung</Th>
                                                <Th $align="right">Menge</Th>
                                                <Th $align="right">Einzelpreis</Th>
                                                <Th $align="right">Gesamtpreis</Th>
                                                <Th $align="right" $heavy>Steuersatz</Th>
                                                <Th>Testfeld</Th>
                                            </tr>
                                        </thead>
                                        <tbody>
                                            {ROWS.map((row, i) => (
                                                <Tr key={i} $stripe={i % 2 === 0}>
                                                    <Td $align="center">{row.pos}</Td>
                                                    <Td>{row.nr}</Td>
                                                    <Td>{row.name}</Td>
                                                    <Td $align="right">{row.qty}</Td>
                                                    <Td $align="right">{row.unit}</Td>
                                                    <Td $align="right">{row.total}</Td>
                                                    <Td $align="right" $heavy>{row.tax}</Td>
                                                    <Td />
                                                </Tr>
                                            ))}
                                        </tbody>
                                    </Table>
                                    <ScrollColumn>
                                        <ScrollHead />
                                        <ScrollTrack><ScrollArrow /></ScrollTrack>
                                    </ScrollColumn>
                                </TableBody>
                            </PositionsPanel>
                        </Content>
                    </Main>
                </Shell>
            </Win>
            <TitleMark />
            <PositionsMark />
            <TestfeldMark />
        </Page>
    );
};

export default App;
